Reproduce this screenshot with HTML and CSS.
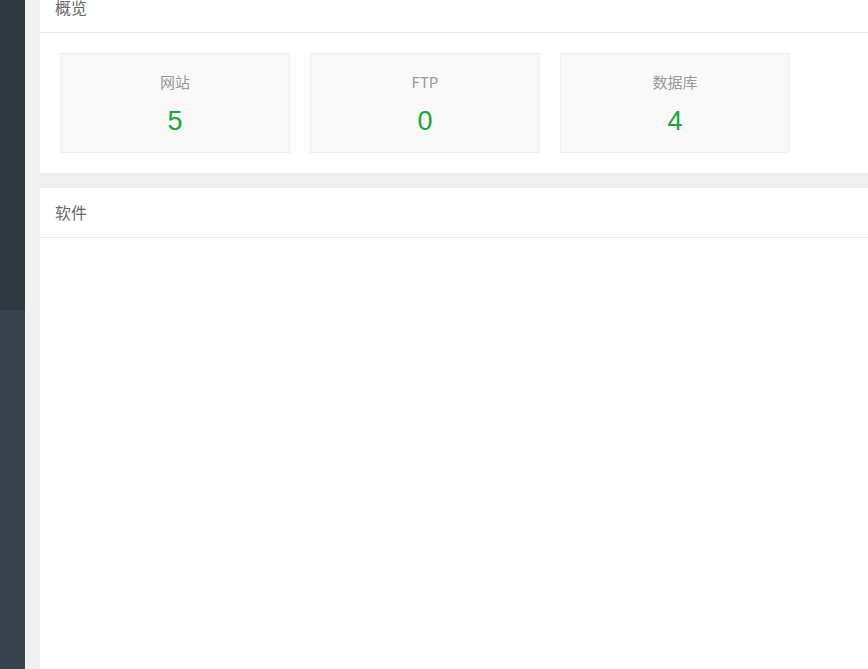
FILE: index.html
```html
<!DOCTYPE html>
<html lang="zh-CN">
<head>
    <meta charset="utf-8">
    <meta name="viewport" content="width=device-width, initial-scale=1">
    <title>首页</title>
    <link rel="stylesheet" href="styles.css">
</head>
<body>
<div class="layout">
    <div class="sidebar">
        <div class="sidebar-top"></div>
        <div class="sidebar-bottom"></div>
    </div>
    <div class="main">
        <div class="panel panel-overview">
            <div class="panel-title">概览</div>
            <div class="panel-body">
                <div class="stat">
                    <div class="stat-label">网站</div>
                    <div class="stat-value">5</div>
                </div>
                <div class="stat">
                    <div class="stat-label">FTP</div>
                    <div class="stat-value">0</div>
                </div>
                <div class="stat">
                    <div class="stat-label">数据库</div>
                    <div class="stat-value">4</div>
                </div>
            </div>
        </div>
        <div class="panel panel-soft">
            <div class="panel-title">软件</div>
            <div class="panel-body"></div>
        </div>
    </div>
</div>
</body>
</html>
```

FILE: styles.css
```css
html, body {
    margin: 0;
    padding: 0;
    height: 100%;
    overflow: hidden;
}

body {
    font-family: "Noto Sans CJK SC", "Liberation Sans", sans-serif;
    background: #f0f0f0;
}

.layout {
    display: flex;
    height: 100%;
}

.sidebar {
    width: 25px;
    flex-shrink: 0;
    display: flex;
    flex-direction: column;
}

.sidebar-top {
    height: 310px;
    background: #2f383f;
}

.sidebar-bottom {
    flex: 1;
    background: #3a434d;
}

.main {
    flex: 1;
    margin-left: 15px;
    margin-top: -17px;
    display: flex;
    flex-direction: column;
}

.panel {
    background: white;
}

.panel-overview {
    margin-bottom: 15px;
}

.panel-soft {
    flex: 1;
}

.panel-title {
    height: 49px;
    line-height: 49px;
    padding-left: 15px;
    font-size: 16px;
    color: #666;
    border-bottom: 1px solid #eaeaea;
}

.panel-overview .panel-body {
    display: flex;
    gap: 20px;
    padding: 20px;
}

.stat {
    width: 228px;
    height: 98px;
    background: #f8f8f8;
    border: 1px solid #eee;
    text-align: center;
}

.stat-label {
    margin-top: 18px;
    font-size: 15px;
    line-height: 20px;
    color: #999;
}

.stat-value {
    margin-top: 14px;
    font-family: "Liberation Sans", Arial, sans-serif;
    font-size: 27px;
    line-height: 30px;
    color: #20a53a;
}
```
